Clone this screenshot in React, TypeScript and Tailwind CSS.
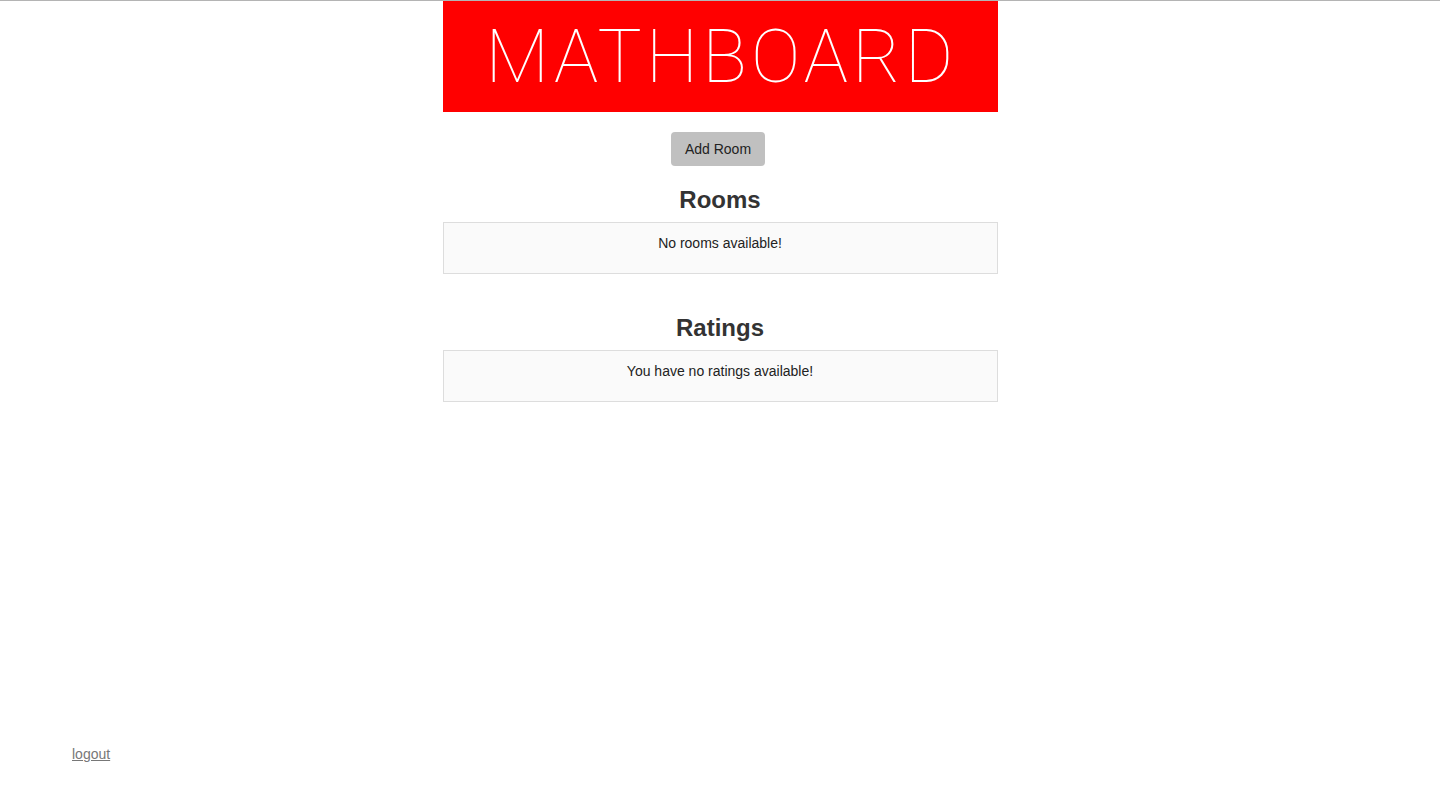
import React from "react";

export default function App() {
  return (
    <div
      className="min-h-screen flex flex-col bg-white border-t border-[#b4b4b4] text-[#333] text-[14px] leading-[20px]"
      style={{ fontFamily: '"Liberation Sans", Arial, sans-serif' }}
    >
      <div className="flex flex-col items-center">
        <div className="w-[555px] h-[111px] bg-[#ff0000] flex items-center justify-center">
          <span
            className="text-white text-[74px] font-thin leading-none tracking-[4.2px] pl-[3px]"
            style={{ fontFamily: 'Roboto, "Helvetica Neue", sans-serif' }}
          >
            MATHBOARD
          </span>
        </div>
        <button className="mt-[20px] ml-[-4px] h-[34px] w-[94px] rounded-[4px] bg-[#c0c0c0] text-[#222] text-[14px]">
          Add Room
        </button>
        <h2 className="mt-[20px] pt-[1px] text-[24px] leading-[26px] font-bold text-[#333]">Rooms</h2>
        <div className="mt-[9px] w-[555px] border border-[#dddddd] bg-[#fafafa] pt-[10px] pb-[20px] text-center text-[#222]">
          No rooms available!
        </div>
        <h2 className="mt-[40px] pt-[1px] text-[24px] leading-[26px] font-bold text-[#333]">Ratings</h2>
        <div className="mt-[9px] w-[555px] border border-[#dddddd] bg-[#fafafa] pt-[10px] pb-[20px] text-center text-[#222]">
          You have no ratings available!
        </div>
      </div>
      <div className="mt-auto pl-[72px] pb-[39px]">
        <a href="#" className="text-[#777] underline">
          logout
        </a>
      </div>
    </div>
  );
}
